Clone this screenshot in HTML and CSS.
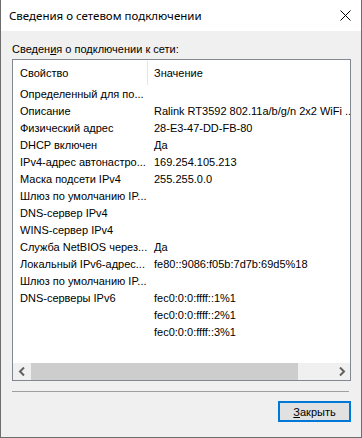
FILE: index.html
```html
<!DOCTYPE html>
<html lang="ru">
<head>
    <meta charset="UTF-8">
    <meta name="viewport" content="width=device-width, initial-scale=1.0">
    <title>Сведения о сетевом подключении</title>
    <link rel="stylesheet" href="styles.css">
</head>
<body>

    <div class="window">
        <div class="titlebar">
            <span class="title">Сведения о сетевом подключении</span>
            <svg class="close" width="11" height="11" viewBox="0 0 11 11">
                <path d="M0.5 0.5 L10.5 10.5 M10.5 0.5 L0.5 10.5" stroke="#000" stroke-width="1" fill="none"/>
            </svg>
        </div>

        <div class="content">
            <div class="caption">Сведен<u>и</u>я о подключении к сети:</div>

            <div class="listview">
                <div class="list-header">
                    <div class="col-name">Свойство</div>
                    <div class="col-value">Значение</div>
                </div>

                <div class="list-body">
                    <div class="row"><div class="col-name">Определенный для по...</div><div class="col-value"></div></div>
                    <div class="row"><div class="col-name">Описание</div><div class="col-value">Ralink RT3592 802.11a/b/g/n 2x2 WiFi ...</div></div>
                    <div class="row"><div class="col-name">Физический адрес</div><div class="col-value">28-E3-47-DD-FB-80</div></div>
                    <div class="row"><div class="col-name">DHCP включен</div><div class="col-value">Да</div></div>
                    <div class="row"><div class="col-name">IPv4-адрес автонастро...</div><div class="col-value">169.254.105.213</div></div>
                    <div class="row"><div class="col-name">Маска подсети IPv4</div><div class="col-value">255.255.0.0</div></div>
                    <div class="row"><div class="col-name">Шлюз по умолчанию IP...</div><div class="col-value"></div></div>
                    <div class="row"><div class="col-name">DNS-сервер IPv4</div><div class="col-value"></div></div>
                    <div class="row"><div class="col-name">WINS-сервер IPv4</div><div class="col-value"></div></div>
                    <div class="row"><div class="col-name">Служба NetBIOS через...</div><div class="col-value">Да</div></div>
                    <div class="row"><div class="col-name">Локальный IPv6-адрес...</div><div class="col-value">fe80::9086:f05b:7d7b:69d5%18</div></div>
                    <div class="row"><div class="col-name">Шлюз по умолчанию IP...</div><div class="col-value"></div></div>
                    <div class="row"><div class="col-name">DNS-серверы IPv6</div><div class="col-value">fec0:0:0:ffff::1%1</div></div>
                    <div class="row"><div class="col-name"></div><div class="col-value">fec0:0:0:ffff::2%1</div></div>
                    <div class="row"><div class="col-name"></div><div class="col-value">fec0:0:0:ffff::3%1</div></div>
                </div>

                <div class="hscroll">
                    <div class="arrow">
                        <svg width="8" height="9" viewBox="0 0 8 9"><path d="M6 0.5 L2 4.5 L6 8.5" stroke="#606060" stroke-width="2" fill="none"/></svg>
                    </div>
                    <div class="track">
                        <div class="thumb"></div>
                    </div>
                    <div class="arrow">
                        <svg width="8" height="9" viewBox="0 0 8 9"><path d="M2 0.5 L6 4.5 L2 8.5" stroke="#606060" stroke-width="2" fill="none"/></svg>
                    </div>
                </div>
            </div>

            <div class="separator"></div>

            <div class="buttons">
                <button type="button" class="btn-close"><u>З</u>акрыть</button>
            </div>
        </div>
    </div>

</body>
</html>
```

FILE: styles.css
```css
body {
    margin: 0;
    padding: 0;
    background: #f0f0f0;
    font-family: "Liberation Sans", Arial, sans-serif;
    font-size: 11px;
    color: #000;
}
.window {
    width: 362px;
    height: 438px;
    box-sizing: border-box;
    border: 1px solid #6d6d6d;
    border-top: none;
    background: #f0f0f0;
    display: flex;
    flex-direction: column;
}
.titlebar {
    height: 31px;
    background: #fff;
    display: flex;
    align-items: center;
    justify-content: space-between;
    padding: 0 10px 0 8px;
}
.title {
    font-family: "Noto Sans", sans-serif;
    font-size: 11.5px;
}
.close {
    display: block;
}
.content {
    flex: 1;
    display: flex;
    flex-direction: column;
    padding: 12px 10px 0 11px;
}
.caption {
    line-height: 13px;
    margin-bottom: 3px;
}
.listview {
    height: 322px;
    box-sizing: border-box;
    border: 1px solid #828790;
    background: #fff;
    display: flex;
    flex-direction: column;
}
.list-header,
.row {
    display: grid;
    grid-template-columns: 135px 1fr;
}
.list-header {
    height: 26px;
    align-items: center;
}
.list-header .col-name {
    border-right: 1px solid #e5e5e5;
    height: 24px;
    line-height: 24px;
}
.col-name {
    padding: 0 4px 0 7px;
    white-space: nowrap;
    overflow: hidden;
}
.col-value {
    padding-left: 6px;
    white-space: nowrap;
    overflow: hidden;
}
.list-body {
    flex: 1;
    overflow: hidden;
}
.row {
    height: 17px;
    line-height: 17px;
}
.hscroll {
    height: 17px;
    background: #f0f0f0;
    display: flex;
}
.arrow {
    width: 17px;
    display: flex;
    align-items: center;
    justify-content: center;
}
.track {
    flex: 1;
    padding-right: 35px;
}
.thumb {
    height: 100%;
    margin-left: 1px;
    background: #cdcdcd;
}
.separator {
    height: 1px;
    background: #a0a0a0;
    margin: 10px 2px 0 0;
}
.buttons {
    display: flex;
    justify-content: flex-end;
    margin-top: 9px;
}
.btn-close {
    width: 73px;
    height: 21px;
    box-sizing: border-box;
    border: 2px solid #0078d7;
    background: #e1e1e1;
    font-family: "Liberation Sans", Arial, sans-serif;
    font-size: 11px;
    color: #000;
    padding: 0;
}
```
